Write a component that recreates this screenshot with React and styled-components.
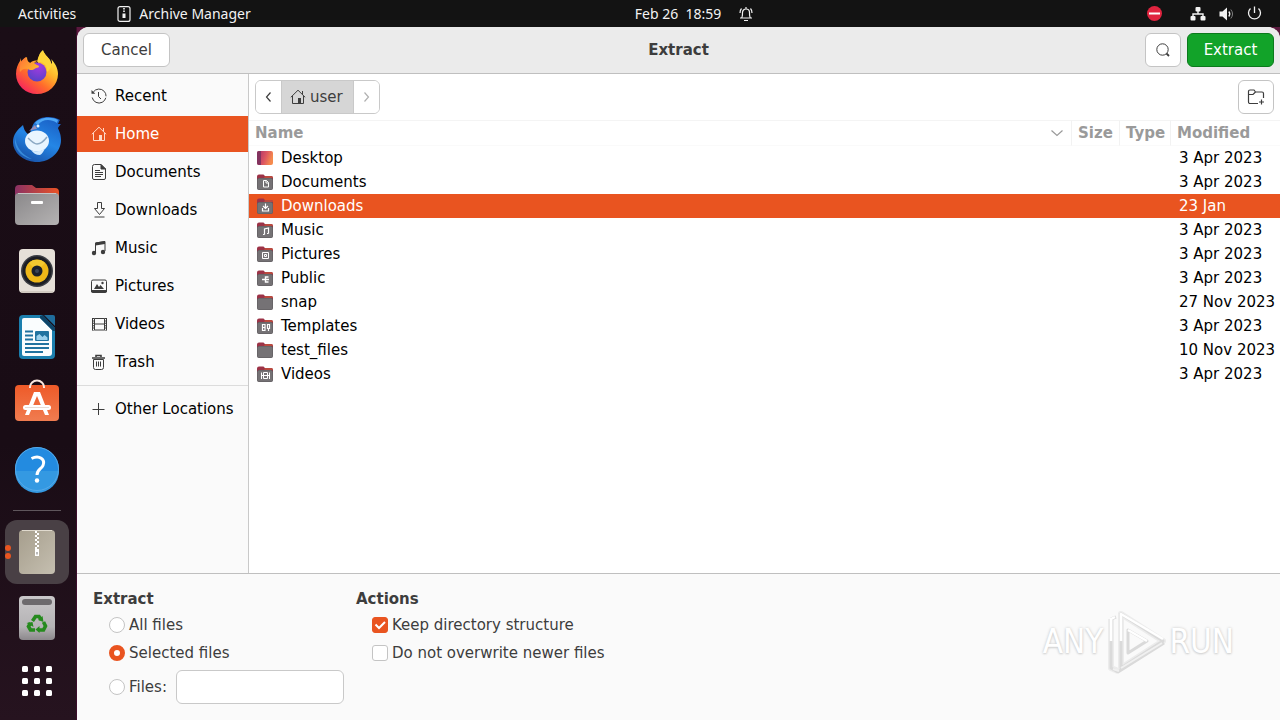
import React, { useState } from 'react';
import styled, { createGlobalStyle } from 'styled-components';

const places = [
  { name: 'Recent', icon: 'recent' },
  { name: 'Home', icon: 'home' },
  { name: 'Documents', icon: 'document' },
  { name: 'Downloads', icon: 'download' },
  { name: 'Music', icon: 'music' },
  { name: 'Pictures', icon: 'picture' },
  { name: 'Videos', icon: 'video' },
  { name: 'Trash', icon: 'trash' },
];

const files = [
  { name: 'Desktop', modified: '3 Apr 2023', emblem: 'desktop' },
  { name: 'Documents', modified: '3 Apr 2023', emblem: 'document' },
  { name: 'Downloads', modified: '23 Jan', emblem: 'download' },
  { name: 'Music', modified: '3 Apr 2023', emblem: 'music' },
  { name: 'Pictures', modified: '3 Apr 2023', emblem: 'picture' },
  { name: 'Public', modified: '3 Apr 2023', emblem: 'public' },
  { name: 'snap', modified: '27 Nov 2023' },
  { name: 'Templates', modified: '3 Apr 2023', emblem: 'template' },
  { name: 'test_files', modified: '10 Nov 2023' },
  { name: 'Videos', modified: '3 Apr 2023', emblem: 'video' },
];

const symbols = {
  recent: (
    <>
      <path d="M2.2 4.2A7 7 0 1 1 1.2 9.5" strokeDasharray="18 1.5 20 1.5" />
      <path d="M7.5 4v4.5L10 11" />
      <path d="M.5 2v3.8h3.8z" fill="currentColor" stroke="none" />
    </>
  ),
  home: (
    <>
      <path d="M.8 8.3 8 1.2l7.2 7.1M2.5 7v7.5h11V7M12.5 2v3.5" />
      <path d="M8 9h3v5.5H8z" fill="currentColor" stroke="none" />
    </>
  ),
  document: (
    <>
      <path d="M3.5.5H10l4.5 4.5v9a1.5 1.5 0 0 1-1.5 1.5H3A1.5 1.5 0 0 1 1.5 14V2.5a2 2 0 0 1 2-2z" />
      <path d="M4 6.5h5M4 8.5h8M4 10.5h8M4 12.5h6" />
      <path d="M10 .5V5h4.5z" fill="currentColor" />
    </>
  ),
  download: <path d="M6.5.5h4v6h3l-5 6-5-6h3zM3.500 15h10" />,
  music: (
    <>
      <path d="M4.5 13V3L14 1.500V11" />
      <path d="M4.5 2.500 14 1v3L4.500 5.500z" fill="currentColor" stroke="none" />
      <circle cx="3" cy="13" r="2.200" fill="currentColor" stroke="none" />
      <circle cx="12" cy="12" r="2.200" fill="currentColor" stroke="none" />
    </>
  ),
  picture: (
    <>
      <rect x=".5" y="2" width="15" height="12.5" rx="1.5" />
      <path d="M.5 12.500h15v1.500H.5z" fill="currentColor" />
      <path d="m3 11 3-5 2 3 1.500-2 3.500 4z" fill="currentColor" stroke="none" />
      <circle cx="11.5" cy="5" r="1.2" fill="currentColor" stroke="none" />
    </>
  ),
  video: (
    <>
      <path d="M3.500 2.500h10v11.500h-10zM3.500 8h10M1.500 2v12.500M15.500 2v12.500" />
      <path d="M2.500 2v12.500M14.500 2v12.500" strokeDasharray="1 1.400" strokeWidth="2" />
    </>
  ),
  trash: (
    <>
      <path d="M2.500 5.500h10v8a2 2 0 0 1-2 2h-6a2 2 0 0 1-2-2zM5.500 7.500v5M7.500 7.500v5M9.500 7.500v5" />
      <path d="M1 4h13M5 3V1.500h5V3" strokeWidth="1.600" />
    </>
  ),
  plus: <path d="M7.500 2v12M1.500 8.500h12" />,
};

const emblems = {
  document: <path d="M6.500 6.500h3l2 2v4.500h-5zM9 6.500v2.500h2.500" />,
  download: <path d="M8.500 5.500v5M6 8l2.500 2.500L11 8M5.500 10v3h6v-3" strokeWidth="1.200" />,
  music: <path d="M7.500 12.500V7l4-1v5.500M6 12.500h1.500M10 11.500h1.500" strokeWidth="1.200" />,
  picture: <path d="M5.500 6.500h6v6h-6zM7.500 8.500h2v2h-2z" />,
  public: <path d="M5 9.500h3.500M8.500 9.500V7h3M8.500 9.500V12h3M8.500 9.500H12" strokeWidth="1.400" />,
  template: <path d="M5.500 6.500h2.500v6H5.500zM10.500 6.500h2v4h-2zM5.500 9.500H8M11.500 10v3" strokeWidth="1.200" />,
  video: <path d="M6.500 6.500h4v6h-4zM4 9.500h9M4.500 6.500v6.500M12.500 6.500v6.500" />,
};

const Symbol = ({ name, size = 16 }) => (
  <svg width={size} height={size} viewBox="0 0 16 16" fill="none" stroke="currentColor" aria-hidden="true">
    {symbols[name]}
  </svg>
);

const FolderIcon = ({ emblem }) => {
  if (emblem === 'desktop') {
    return (
      <svg width="16" height="16" viewBox="0 0 16 16" aria-hidden="true">
        <defs>
          <linearGradient id="desk" y2=".3">
            <stop offset=".2" stopColor="#b93a68" />
            <stop offset=".6" stopColor="#dc5661" />
            <stop offset="1" stopColor="#f58a4d" />
          </linearGradient>
        </defs>
        <rect y="1" width="16" height="14" rx="2" fill="url(#desk)" />
        <path d="M2 1h2v14H2a2 2 0 0 1-2-2V3a2 2 0 0 1 2-2z" fill="#83335f" />
      </svg>
    );
  }
  return (
    <svg width="16" height="16" viewBox="0 0 16 16" aria-hidden="true">
      <path d="M2 .5h4.500L8 2h6a2 2 0 0 1 2 2v4H0V2.500a2 2 0 0 1 2-2z" fill="#9c3347" />
      <path d="M8 2h6a2 2 0 0 1 2 2H7z" fill="#bb4a3f" />
      <rect y="4" width="16" height="12" rx="2" fill="#5c585c" />
      <rect x=".5" y="4.500" width="15" height="11" rx="1.500" fill="#757275" />
      <g fill="none" stroke="#fff">{emblems[emblem]}</g>
    </svg>
  );
};

const Firefox = () => (
  <svg width="48" height="48" viewBox="0 1 48 48" aria-hidden="true">
    <defs>
      <linearGradient id="ffBody" x1=".85" y1=".1" x2=".2" y2=".95">
        <stop offset="0" stopColor="#fff14a" />
        <stop offset=".35" stopColor="#ffb52a" />
        <stop offset=".65" stopColor="#ff6a2c" />
        <stop offset="1" stopColor="#f6245f" />
      </linearGradient>
      <radialGradient id="ffGlobe" cx=".6" cy=".2" r=".8">
        <stop offset="0" stopColor="#a43be0" />
        <stop offset="1" stopColor="#5b41c9" />
      </radialGradient>
      <linearGradient id="ffHead" x1="0" y1="0" x2="1" y2=".6">
        <stop offset="0" stopColor="#ff7139" />
        <stop offset="1" stopColor="#ffb62c" />
      </linearGradient>
    </defs>
    <path d="M30 2c1 4 5 7 7 10 1 2 1 3 2 4 0-2 0-3-1-5 4 4 7 9 7 15a21 20 0 0 1-42 0c0-6 2-10 4-13l1-3c0 2 0 3 1 4 1-2 3-4 5-5 0 3 1 5 3 6 3 0 5-1 8 0 0-5 1-10 5-13z" fill="url(#ffBody)" />
    <circle cx="24" cy="24" r="9.5" fill="url(#ffGlobe)" />
    <path d="M25 13c-3-1-6 0-8 2-3-1-4-3-4-6-2 1-4 3-5 5-1 3-2 6-1 10 2-3 5-4 8-3 2 2 6 1 8-1 2 0 3-1 3-2-2-1-4-2-5-3 1-1 2-2 4-2z" fill="url(#ffHead)" />
    <path d="M24 14c6-1 11 4 10 10 4-3 5-7 3-11-1-3-5-6-7-10-4 3-5 7-6 11z" fill="#ffd53a" />
  </svg>
);

const Thunderbird = () => (
  <svg width="48" height="48" viewBox="0 0 48 48" aria-hidden="true">
    <defs>
      <linearGradient id="tb" x1=".8" y1="0" x2=".3" y2="1">
        <stop offset="0" stopColor="#1a5fc4" />
        <stop offset=".5" stopColor="#2486e6" />
        <stop offset="1" stopColor="#1852a8" />
      </linearGradient>
    </defs>
    <path d="M10 10C4 15 0 20 0 27a24 20 0 0 0 22 20c15 1 26-10 26-22 0-6-2-9-3-12 1-2 2-3 3-4h-3c1-2 1-3 2-4-8-5-21-4-26 3-2 3-2 6-5 12-4-3-5-6-6-10z" fill="url(#tb)" />
    <path d="M22 8c4-5 16-7 23-3l-1 3c-8-5-15-3-19 2z" fill="#4fa8f6" />
    <path d="M2 22c1 10 7 18 17 22-8-1-16-7-17-16z" fill="#4ba9f2" opacity=".6" />
    <ellipse cx="24" cy="26" rx="12" ry="10.5" fill="#e9f5ff" />
    <path d="M15 23c3 3 6 6 9 6s7-3 10-7" fill="none" stroke="#8ca9c4" strokeWidth="1.500" />
    <path d="M18 35c4 2 10 2 14-2-1 3-3 6-5 7-4 0-7-2-9-5z" fill="#d4ebff" />
    <circle cx="25" cy="11" r="1.500" fill="#e9f5ff" />
    <path d="m16 16 6-6 2 4c-3 0-5 1-8 2z" fill="#9a8eb8" />
  </svg>
);

const FilesIcon = () => (
  <svg width="48" height="48" viewBox="0 0 48 48" aria-hidden="true">
    <defs>
      <linearGradient id="flap">
        <stop offset="0" stopColor="#8a3164" />
        <stop offset="1" stopColor="#ea5325" />
      </linearGradient>
      <linearGradient id="front" x2="1" y2="1">
        <stop offset="0" stopColor="#8a888a" />
        <stop offset="1" stopColor="#b5b3b3" />
      </linearGradient>
    </defs>
    <path d="M6 4h13l4 3h19a4 4 0 0 1 4 4v20H2V8a4 4 0 0 1 4-4z" fill="url(#flap)" />
    <rect x="2" y="12" width="44" height="32" rx="4" fill="url(#front)" />
    <path d="M5 12.500h38" stroke="#c6c4c4" />
    <rect x="18" y="20" width="12" height="3" rx="1" fill="#fff" />
  </svg>
);

const Rhythmbox = () => (
  <svg width="48" height="48" viewBox="0 0 48 48" aria-hidden="true">
    <rect x="6" y="2" width="36" height="44" rx="4" fill="#e6e0d8" />
    <path d="M8 45h32" stroke="#bcb4aa" />
    <circle cx="24" cy="24" r="16" fill="#3b3d43" />
    <circle cx="24" cy="24" r="14.500" fill="#1c1e24" />
    <circle cx="24" cy="24" r="11.500" fill="#efb818" />
    <path d="M16 16a11.500 11.500 0 0 1 16 0l-8 8z" fill="#f4c930" />
    <circle cx="24" cy="24" r="5.500" fill="#1c212c" />
    <circle cx="24" cy="24" r="2" fill="#3a4458" />
  </svg>
);

const Writer = () => (
  <svg width="48" height="48" viewBox="0 0 48 48" aria-hidden="true">
    <path d="M10 2h19l13 13v27a4 4 0 0 1-4 4H10a4 4 0 0 1-4-4V6a4 4 0 0 1 4-4z" fill="#1b7fae" />
    <path d="M11 5h16l12 12v23a3 3 0 0 1-3 3H11a2 2 0 0 1-2-2V7a2 2 0 0 1 2-2z" fill="#fafdfe" />
    <path d="M31 2h9a2 2 0 0 1 2 2v9z" fill="#1f6d9c" />
    <path d="M27 3v2l13 13h2v-3L30 2z" fill="#0e4568" />
    <path d="M12 18.500h8M12 22.500h8M12 26.500h8M12 31h24M12 35h24M12 39h18" stroke="#2173a0" strokeWidth="2" />
    <rect x="22" y="18" width="14" height="10" rx="1" fill="#2173a0" />
    <path d="M23.500 27v-4l3-2 3 3 2-2 3 2.500V27z" fill="#9bd0ec" />
  </svg>
);

const Software = () => (
  <svg width="48" height="48" viewBox="0 0 48 48" aria-hidden="true">
    <defs>
      <linearGradient id="bag" x2="0" y2="1">
        <stop offset="0" stopColor="#ee5a28" />
        <stop offset="1" stopColor="#f07c50" />
      </linearGradient>
    </defs>
    <rect x="2" y="6" width="44" height="36" rx="4" fill="url(#bag)" />
    <path d="M17 9V8a7 6.500 0 0 1 14 0v1" fill="none" stroke="#f8e6dd" strokeWidth="2" />
    <path d="M21 13h6l9 23h-4l-8-19-8 19h-4z" fill="#fff" />
    <rect x="10" y="26" width="28" height="5" rx="2.500" fill="#fff" />
    <path d="M12 28.500h24" stroke="#e8dcd6" />
  </svg>
);

const Help = () => (
  <svg width="48" height="48" viewBox="0 0 48 48" aria-hidden="true">
    <circle cx="24" cy="24" r="22" fill="#238be0" />
    <path d="M2 26a22 22 0 0 0 44 0z" fill="#3499e2" />
    <circle cx="24" cy="24" r="21.500" fill="none" stroke="#55a9e8" />
    <path d="M18.500 13.500c8-4 14 1 11.500 7-1.500 3.500-6 4-6 9.500" fill="none" stroke="#fff" strokeWidth="3" />
    <circle cx="24" cy="35.500" r="2.200" fill="#fff" />
  </svg>
);

const Archive = () => (
  <svg width="48" height="48" viewBox="0 0 48 48" aria-hidden="true">
    <defs>
      <linearGradient id="zip" x2="1" y2="1">
        <stop offset="0" stopColor="#a69e8d" />
        <stop offset="1" stopColor="#c5bfb0" />
      </linearGradient>
    </defs>
    <rect x="6" y="2" width="36" height="44" rx="4" fill="url(#zip)" />
    <path d="M9 2.500h30" stroke="#e0dace" />
    <path d="M23 3v19" stroke="#fff" strokeWidth="2" strokeDasharray="2 2" />
    <path d="M25 5v17" stroke="#fff" strokeWidth="2" strokeDasharray="2 2" />
    <path d="M22 21h4v7h-4z" fill="#fff" />
    <path d="M23.500 24h1v2.500h-1z" fill="#777" />
  </svg>
);

const Bin = () => (
  <svg width="48" height="48" viewBox="0 0 48 48" aria-hidden="true">
    <defs>
      <linearGradient id="bin" x2="0" y2="1">
        <stop offset="0" stopColor="#c9c7c9" />
        <stop offset=".7" stopColor="#b5b3b5" />
        <stop offset="1" stopColor="#8c888c" />
      </linearGradient>
    </defs>
    <rect x="6" y="2" width="36" height="44" rx="4" fill="url(#bin)" />
    <rect x="9" y="5" width="30" height="6" rx="3" fill="#6d6a6d" />
    <g fill="none" stroke="#268a1e" strokeWidth="3.600">
      <path d="m19.500 27 3-4.500h3.500l2 3" />
      <path d="m30.500 28 2 4-2 4h-5" />
      <path d="M22 36h-4.500l-2-3.500 2-3.500" />
    </g>
    <path d="m29.500 22 1 6-5.500-2zM26.500 32v7l-4-3.500zM13.500 29l6-1 1 5z" fill="#268a1e" />
  </svg>
);

const AppGrid = () => (
  <svg width="48" height="48" viewBox="0 0 48 48" fill="#fff" aria-hidden="true">
    {[9, 21, 33].map((y) => [9, 21, 33].map((x) => (
      <rect key={x + '-' + y} x={x} y={y} width="6" height="6" rx="1.500" />
    )))}
  </svg>
);

const dockApps = [
  { name: 'Firefox', Icon: Firefox },
  { name: 'Thunderbird', Icon: Thunderbird },
  { name: 'Files', Icon: FilesIcon },
  { name: 'Rhythmbox', Icon: Rhythmbox },
  { name: 'LibreOffice Writer', Icon: Writer },
  { name: 'Software', Icon: Software },
  { name: 'Help', Icon: Help },
];

const TopBar = () => (
  <Bar>
    <BarSide>
      <BarButton>Activities</BarButton>
      <BarButton>
        <svg width="14" height="16" viewBox="0 0 14 16" fill="none" stroke="#f2f2f2" aria-hidden="true">
          <rect x="1" y=".6" width="12" height="14.800" rx="2" strokeWidth="1.200" />
          <path d="M7 2v5" strokeWidth="1.600" strokeDasharray="1.500 1" />
          <path d="M5.500 7.500h3V12h-3z" fill="#f2f2f2" stroke="none" />
        </svg>
        Archive Manager
      </BarButton>
    </BarSide>
    <Clock>
      <span>Feb 26  18:59</span>
      <svg width="14" height="16" viewBox="0 0 14 16" fill="none" stroke="#f2f2f2" strokeWidth="1.200" aria-hidden="true">
        <path d="M2.500 12c1-1 1-2.500 1-5.500a3.500 3.500 0 0 1 7 0c0 3 0 4.500 1 5.500zM7 3V1M1 12h12M5 14.500h4M1 7c0-2 .5-3.500 1.500-4.500M13 7c0-2-.5-3.500-1.500-4.500" />
      </svg>
    </Clock>
    <Status>
      <svg width="16" height="16" viewBox="0 1 16 16" aria-label="Do not disturb">
        <circle cx="8.500" cy="8.500" r="7.500" fill="#e0243f" />
        <path d="M3 8.500h11" stroke="#fff" strokeWidth="2" />
      </svg>
      <Indicators>
        <svg width="16" height="16" viewBox="0 0 16 16" fill="#f2f2f2" aria-hidden="true">
          <rect x="5.500" y="1" width="5" height="4.500" rx="1" />
          <rect x=".5" y="10" width="5" height="4.500" rx="1" />
          <rect x="10.500" y="10" width="5" height="4.500" rx="1" />
          <path d="M8 5v3M3 11V8h10v3" fill="none" stroke="#f2f2f2" strokeWidth="1.400" />
        </svg>
        <svg width="16" height="16" viewBox="0 0 16 16" fill="none" stroke="#f2f2f2" aria-hidden="true">
          <path d="M1.500 5.500h3L9 1.500v13l-4.500-4h-3z" fill="#f2f2f2" stroke="none" />
          <path d="M10.800 5.500q2 2.500 0 5" strokeWidth="1.300" />
          <path d="M12.800 3.500q3.500 4.500 0 9" stroke="#808080" />
        </svg>
        <svg width="16" height="16" viewBox="0 1 16 16" fill="none" stroke="#f2f2f2" strokeWidth="1.300" aria-hidden="true">
          <path d="M4.500 3.500a6 6 0 1 0 8 0M8.500 1.500v6.500" />
        </svg>
      </Indicators>
    </Status>
  </Bar>
);

const Dock = () => (
  <DockBar>
    {dockApps.map(({ name, Icon }) => (
      <DockItem key={name} aria-label={name}><Icon /></DockItem>
    ))}
    <DockLine />
    <DockItem $active aria-label="Archive Manager">
      <RunningDots><i /><i /></RunningDots>
      <Archive />
    </DockItem>
    <DockItem aria-label="Trash"><Bin /></DockItem>
    <DockItem $short aria-label="Show Applications"><AppGrid /></DockItem>
  </DockBar>
);

const Chevron = ({ d }) => (
  <svg width="16" height="16" viewBox="0 0 16 16" fill="none" stroke="currentColor" strokeWidth="1.200" aria-hidden="true">
    <path d={d} />
  </svg>
);

const Watermark = () => (
  <Brand>
    <span>ANY</span>
    <svg width="60" height="64" viewBox="0 0 60 64" fill="none" strokeLinejoin="round" aria-hidden="true">
      <path d="M15 4 57 31 15 58zM5 9v49l7 3" stroke="#dedede" strokeWidth="6" opacity=".5" />
      <path d="M15 4 57 31 15 58zM5 9v49l7 4 46-29M5 9l5-2M22 20v23l19-12z" stroke="#dadada" strokeWidth="3" />
      <path d="M15 31V4l42 25M5 31V9l4-2M22 20l19 11" stroke="#fff" strokeWidth="2.500" />
      <path d="m15 58 41-25M7 59l6 2" stroke="#f0f0f0" strokeWidth="2" />
    </svg>
    <span>RUN</span>
  </Brand>
);

const App = () => {
  const [place, setPlace] = useState('Home');
  const [selected, setSelected] = useState('Downloads');
  const [scope, setScope] = useState('selected');

  return (
    <Desktop>
      <GlobalStyle />
      <TopBar />
      <Dock />
      <Dialog>
        <Header>
          <Button $wide>Cancel</Button>
          <Title>Extract</Title>
          <HeaderEnd>
            <Button aria-label="Search">
              <svg width="16" height="16" viewBox="0 0 16 16" fill="none" stroke="currentColor" aria-hidden="true">
                <circle cx="7.500" cy="7.500" r="5.700" />
                <path d="m11.500 11.500 2.500 2.500" strokeWidth="1.800" />
              </svg>
            </Button>
            <Button $wide $suggested>Extract</Button>
          </HeaderEnd>
        </Header>

        <Content>
          <Sidebar>
            {places.map((item) => (
              <Place key={item.name} $active={item.name === place} onClick={() => setPlace(item.name)}>
                <Symbol name={item.icon} />
                {item.name}
              </Place>
            ))}
            <SideLine />
            <Place>
              <Symbol name="plus" />
              Other Locations
            </Place>
          </Sidebar>

          <Browser>
            <PathRow>
              <PathBar>
                <PathButton aria-label="Back"><Chevron d="M9.500 3.500 5.500 8l4 4.500" /></PathButton>
                <PathButton $current><Symbol name="home" />user</PathButton>
                <PathButton $dim aria-label="Forward"><Chevron d="m6.500 3.500 4 4.500-4 4.500" /></PathButton>
              </PathBar>
              <Button aria-label="Create Folder">
                <svg width="18" height="18" viewBox="0 0 18 18" fill="none" stroke="currentColor" strokeWidth="1.200" aria-hidden="true">
                  <path d="M11 15.500H3A1.500 1.500 0 0 1 1.500 14V3.500A1.500 1.500 0 0 1 3 2h4l1.500 2h6.500A1.500 1.500 0 0 1 16.500 5.500V10M1.500 6.500H6L8.500 4M14.500 11.500v5M12 14h5" />
                </svg>
              </Button>
            </PathRow>
            <FileTable>
              <colgroup>
                <col />
                <Col $width={48} />
                <Col $width={51} />
                <Col $width={109} />
              </colgroup>
              <thead>
                <tr>
                  <HeadCell>
                    <SortLabel>Name<Chevron d="m2.500 5.500 5.500 5 5.500-5" /></SortLabel>
                  </HeadCell>
                  <HeadCell>Size</HeadCell>
                  <HeadCell>Type</HeadCell>
                  <HeadCell>Modified</HeadCell>
                </tr>
              </thead>
              <tbody>
                {files.map((file) => (
                  <Row key={file.name} $active={file.name === selected} onClick={() => setSelected(file.name)}>
                    <Cell><FileName><FolderIcon emblem={file.emblem} />{file.name}</FileName></Cell>
                    <Cell />
                    <Cell />
                    <Cell>{file.modified}</Cell>
                  </Row>
                ))}
              </tbody>
            </FileTable>
          </Browser>
        </Content>

        <Options>
          <Group>
            <Legend>Extract</Legend>
            <Option>
              <Radio name="scope" checked={scope === 'all'} onChange={() => setScope('all')} />
              All files
            </Option>
            <Option>
              <Radio name="scope" checked={scope === 'selected'} onChange={() => setScope('selected')} />
              Selected files
            </Option>
            <FilesRow>
              <Option>
                <Radio name="scope" checked={scope === 'files'} onChange={() => setScope('files')} />
                Files:
              </Option>
              <Entry aria-label="Files" />
            </FilesRow>
          </Group>
          <Group>
            <Legend>Actions</Legend>
            <Option>
              <CheckWrap>
                <Check defaultChecked />
                <svg width="16" height="16" viewBox="0 0 16 16" fill="none" stroke="#fff" strokeWidth="2" aria-hidden="true">
                  <path d="m3.500 7.500 3.500 3.500 6-6" />
                </svg>
              </CheckWrap>
              Keep directory structure
            </Option>
            <Option>
              <Check />
              Do not overwrite newer files
            </Option>
          </Group>
          <Watermark />
        </Options>
      </Dialog>
    </Desktop>
  );
};

const GlobalStyle = createGlobalStyle`
  * {
    box-sizing: border-box;
  }
  body {
    margin: 0;
    font-family: "DejaVu Sans", sans-serif;
    font-size: 15px;
    line-height: 18px;
    color: #3d3d3d;
  }
  button, input {
    font: inherit;
    color: inherit;
    margin: 0;
  }
  svg {
    display: block;
    flex: none;
  }
`;

const Desktop = styled.div`
  display: grid;
  grid-template-columns: 77px 1fr;
  grid-template-rows: 27px 1fr;
  min-height: 100vh;
  background: #5b1a3e;
`;

const Bar = styled.header`
  grid-column: 1 / -1;
  display: grid;
  grid-template-columns: 1fr auto 1fr;
  align-items: center;
  background: #131313;
  color: #f2f2f2;
  font-family: "Noto Sans", sans-serif;
  font-size: 14px;
`;

const BarSide = styled.div`
  display: flex;
  gap: 41px;
  padding-left: 18px;
`;

const BarButton = styled.button`
  display: flex;
  align-items: center;
  gap: 8px;
  padding: 0;
  border: 0;
  background: none;
`;

const Clock = styled.div`
  display: flex;
  align-items: center;
  gap: 18px;
  padding-left: 108px;
  white-space: pre;
`;

const Status = styled.div`
  display: flex;
  justify-content: flex-end;
  align-items: center;
  gap: 28px;
  padding-right: 18px;
`;

const Indicators = styled.div`
  display: flex;
  gap: 12px;
`;

const DockBar = styled.nav`
  display: flex;
  flex-direction: column;
  gap: 2px;
  padding: 14px 0 0 5px;
  background: linear-gradient(#1a0d16, #190c15 60%, #26131f);
  border-right: 1px solid #3c0c2b;
`;

const DockItem = styled.button`
  position: relative;
  display: flex;
  align-items: center;
  justify-content: center;
  width: 64px;
  height: ${(props) => (props.$short ? '58px' : '64px')};
  padding: 0;
  border: 0;
  border-radius: 12px;
  background: ${(props) => (props.$active ? '#494045' : 'none')};
`;

const DockLine = styled.div`
  width: 48px;
  height: 1px;
  margin: 7px 8px;
  background: #5f565c;
`;

const RunningDots = styled.span`
  position: absolute;
  left: 0;
  display: grid;
  gap: 2px;

  i {
    width: 6px;
    height: 6px;
    border-radius: 50%;
    background: #e95420;
  }
`;

const Dialog = styled.main`
  display: flex;
  flex-direction: column;
  background: #fafafa;
  border-radius: 12px 12px 0 0;
  overflow: hidden;
`;

const Header = styled.div`
  display: grid;
  grid-template-columns: 1fr auto 1fr;
  align-items: center;
  padding: 6px;
  background: #ebebeb;
  border-bottom: 1px solid #bfbfbf;
`;

const Title = styled.h1`
  margin: 0;
  font-size: 15px;
  font-weight: bold;
`;

const HeaderEnd = styled.div`
  display: flex;
  justify-content: flex-end;
  gap: 6px;
`;

const Button = styled.button`
  display: flex;
  align-items: center;
  justify-content: center;
  width: ${(props) => (props.$wide ? '87px' : '36px')};
  height: 34px;
  padding: 0;
  border: 1px solid ${(props) => (props.$suggested ? '#0b7a1c' : '#c4c4c4')};
  border-radius: 6px;
  background: ${(props) => (props.$suggested ? '#12a329' : '#fff')};
  color: ${(props) => (props.$suggested ? '#fff' : '#3d3d3d')};
`;

const Content = styled.div`
  display: flex;
  flex: 1;
`;

const Sidebar = styled.nav`
  display: flex;
  flex-direction: column;
  gap: 2px;
  width: 172px;
  padding-top: 4px;
  border-right: 1px solid #c9c9c9;
`;

const Place = styled.button`
  display: flex;
  align-items: center;
  gap: 8px;
  height: 36px;
  padding: 0 14px;
  border: 0;
  background: ${(props) => (props.$active ? '#e95420' : 'none')};
  color: ${(props) => (props.$active ? '#fff' : '#000')};
  white-space: nowrap;

  svg {
    color: ${(props) => (props.$active ? '#ffd9c8' : '#3d3d3d')};
  }
`;

const SideLine = styled.div`
  height: 1px;
  margin: 3px 0;
  background: #dcdcdc;
`;

const Browser = styled.section`
  flex: 1;
  background: #fff;
`;

const PathRow = styled.div`
  display: flex;
  justify-content: space-between;
  padding: 6px;
`;

const PathBar = styled.div`
  display: flex;
  height: 34px;
  border: 1px solid #c9c9c9;
  border-radius: 6px;
  overflow: hidden;
`;

const PathButton = styled.button`
  display: flex;
  align-items: center;
  justify-content: center;
  gap: 4px;
  min-width: 25px;
  padding: ${(props) => (props.$current ? '0 10px 0 8px' : '0')};
  border: solid #c9c9c9;
  border-width: ${(props) => (props.$current ? '0 1px' : '0')};
  background: ${(props) => (props.$current ? '#d6d6d6' : '#fff')};
  color: ${(props) => (props.$dim ? '#b0b0b0' : '#3d3d3d')};
`;

const FileTable = styled.table`
  width: 100%;
  table-layout: fixed;
  border-collapse: separate;
  border-spacing: 0;
`;

const Col = styled.col`
  width: ${(props) => props.$width}px;
`;

const HeadCell = styled.th`
  height: 26px;
  padding: 0 6px;
  border-top: 1px solid #f4f4f4;
  border-bottom: 1px solid #fafafa;
  border-right: 1px solid #f2f2f2;
  color: #9a9a9a;
  text-align: left;

  &:last-child {
    border-right: 0;
  }
`;

const SortLabel = styled.div`
  display: flex;
  align-items: center;
  justify-content: space-between;
`;

const Row = styled.tr`
  background: ${(props) => (props.$active ? '#e95420' : 'none')};
  color: ${(props) => (props.$active ? '#fff' : '#000')};
`;

const Cell = styled.td`
  height: 24px;
  padding: 0 0 0 8px;
  white-space: nowrap;
`;

const FileName = styled.div`
  display: flex;
  align-items: center;
  gap: 8px;
`;

const Options = styled.footer`
  position: relative;
  display: flex;
  gap: 12px;
  padding: 16px;
  border-top: 1px solid #bfbfbf;
`;

const Group = styled.div`
  display: flex;
  flex-direction: column;
  gap: 6px;
`;

const Legend = styled.h2`
  margin: 0;
  font-size: 15px;
  font-weight: bold;
`;

const Option = styled.label`
  display: flex;
  align-items: center;
  gap: 4px;
  height: 22px;
  padding-left: 16px;
`;

const FilesRow = styled.div`
  display: flex;
  align-items: center;
  justify-content: space-between;
  gap: 9px;
`;

const Radio = styled.input.attrs({ type: 'radio' })`
  appearance: none;
  width: 16px;
  height: 16px;
  border: 1px solid #c4c4c4;
  border-radius: 50%;
  background: #fff;

  &:checked {
    border: 5px solid #e95420;
  }
`;

const CheckWrap = styled.span`
  position: relative;
  display: flex;

  svg {
    position: absolute;
    inset: 0;
    pointer-events: none;
  }
`;

const Check = styled.input.attrs({ type: 'checkbox' })`
  appearance: none;
  width: 16px;
  height: 16px;
  border: 1px solid #c4c4c4;
  border-radius: 3px;
  background: #fff;

  &:checked {
    border-color: #e95420;
    background: #e95420;
  }
`;

const Entry = styled.input`
  width: 168px;
  height: 34px;
  padding: 0 8px;
  border: 1px solid #c9c9c9;
  border-radius: 6px;
  background: #fff;
`;

const Brand = styled.div`
  position: absolute;
  right: 46px;
  bottom: 46px;
  display: flex;
  align-items: center;
  gap: 3px;
  color: #fff;
  font-family: "DejaVu Sans Condensed", "DejaVu Sans", sans-serif;
  font-size: 33px;
  line-height: 64px;
  text-shadow: 0 0 3px #cccccc, 0 1px 2px #d4d4d4;
  pointer-events: none;
`;

export default App;
